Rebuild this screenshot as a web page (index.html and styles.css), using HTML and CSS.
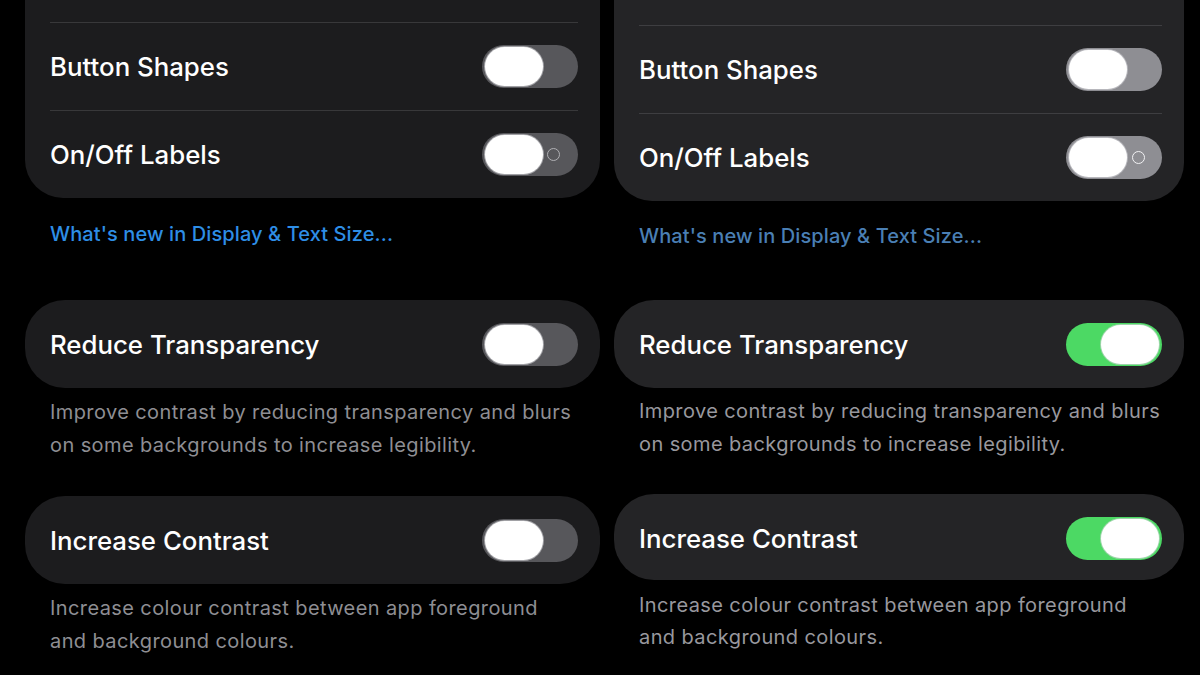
FILE: index.html
```html
<!DOCTYPE html>
<html>
<head>
<meta charset="utf-8">
<link rel="stylesheet" href="styles.css">
</head>
<body>
<div class="screen">
  <section class="panel panel-left">
    <div class="card card-top">
      <div class="spacer"></div>
      <div class="row divided">
        <span class="label">Button Shapes</span>
        <span class="toggle"><span class="knob"></span></span>
      </div>
      <div class="row divided">
        <span class="label">On/Off Labels</span>
        <span class="toggle"><span class="knob"></span><span class="ring"></span></span>
      </div>
    </div>
    <div class="link">What's new in Display &amp; Text Size...</div>
    <div class="card card-pill first-pill">
      <div class="row">
        <span class="label">Reduce Transparency</span>
        <span class="toggle"><span class="knob"></span></span>
      </div>
    </div>
    <p class="desc">Improve contrast by reducing transparency and blurs on some backgrounds to increase legibility.</p>
    <div class="card card-pill second-pill">
      <div class="row">
        <span class="label">Increase Contrast</span>
        <span class="toggle"><span class="knob"></span></span>
      </div>
    </div>
    <p class="desc second-desc">Increase colour contrast between app foreground and background colours.</p>
  </section>

  <section class="panel panel-right">
    <div class="card card-top">
      <div class="spacer"></div>
      <div class="row divided">
        <span class="label">Button Shapes</span>
        <span class="toggle"><span class="knob"></span></span>
      </div>
      <div class="row divided">
        <span class="label">On/Off Labels</span>
        <span class="toggle"><span class="knob"></span><span class="ring"></span></span>
      </div>
    </div>
    <div class="link">What's new in Display &amp; Text Size...</div>
    <div class="card card-pill first-pill">
      <div class="row">
        <span class="label">Reduce Transparency</span>
        <span class="toggle on"><span class="knob"></span></span>
      </div>
    </div>
    <p class="desc">Improve contrast by reducing transparency and blurs on some backgrounds to increase legibility.</p>
    <div class="card card-pill second-pill">
      <div class="row">
        <span class="label">Increase Contrast</span>
        <span class="toggle on"><span class="knob"></span></span>
      </div>
    </div>
    <p class="desc second-desc">Increase colour contrast between app foreground and background colours.</p>
  </section>
</div>
</body>
</html>
```

FILE: styles.css
```css
* { box-sizing: border-box; }
html, body {
  margin: 0;
  padding: 0;
  background: #000;
  width: 1200px;
  height: 675px;
  overflow: hidden;
}
body {
  font-family: Inter, "Noto Sans", "Liberation Sans", sans-serif;
  color: #fff;
}
.screen {
  display: flex;
  gap: 14px;
  padding-left: 25px;
}
.panel {
  display: flex;
  flex-direction: column;
}
.panel-left { width: 575px; }
.panel-right { width: 570px; }

.card {
  background: #1c1c1e;
  padding: 0 22px 0 25px;
}
.panel-right .card { background: #242426; }

.card-top {
  border-radius: 0 0 38px 38px;
}
.spacer { height: 22px; }
.panel-right .spacer { height: 25px; }

.row {
  height: 88px;
  display: flex;
  align-items: center;
  justify-content: space-between;
}
.divided { border-top: 1px solid #38383a; }
.panel-right .divided { border-top-color: #3e3e41; }

.label {
  font-size: 25.8px;
  font-weight: 500;
  letter-spacing: 0;
}

.toggle {
  position: relative;
  width: 96px;
  height: 43px;
  border-radius: 22px;
  background: #57575b;
  flex: none;
}
.panel-right .toggle { background: #8e8e93; }
.toggle .knob {
  position: absolute;
  left: 3px;
  top: 2px;
  width: 58px;
  height: 39px;
  border-radius: 20px;
  background: #fff;
  box-shadow: 0 0 0 1px rgba(210,210,215,0.6);
}
.toggle.on { background: #4cd964; }
.panel-right .toggle.on { background: #4cd964; }
.toggle.on .knob { left: auto; right: 3px; }
.toggle .ring {
  position: absolute;
  right: 18px;
  top: 15px;
  width: 13px;
  height: 13px;
  border-radius: 50%;
  border: 1.5px solid #b0b0b4;
}
.panel-right .toggle .ring { border-color: #f2f2f4; right: 17px; }

.link {
  margin: 24px 0 0 25px;
  height: 24px;
  line-height: 24px;
  font-size: 20px;
  font-weight: 500;
  letter-spacing: 0.1px;
  color: #2e8ee6;
}
.panel-right .link {
  margin-top: 23px;
  color: #4a7fb4;
}

.card-pill {
  border-radius: 40px;
  height: 88px;
}
.first-pill { margin-top: 54px; }
.panel-right .first-pill { margin-top: 52px; }
.second-pill { margin-top: 34px; }
.panel-right .second-pill { margin-top: 33px; height: 86px; }

.desc {
  margin: 8px 0 0 25px;
  font-size: 20px;
  letter-spacing: 0.4px;
  line-height: 33px;
  color: #8e8e93;
  width: 528px;
}
.panel-right .desc { color: #98989e; margin-top: 7px; }
.panel-right .second-desc { line-height: 32px; margin-top: 9px; }
```
